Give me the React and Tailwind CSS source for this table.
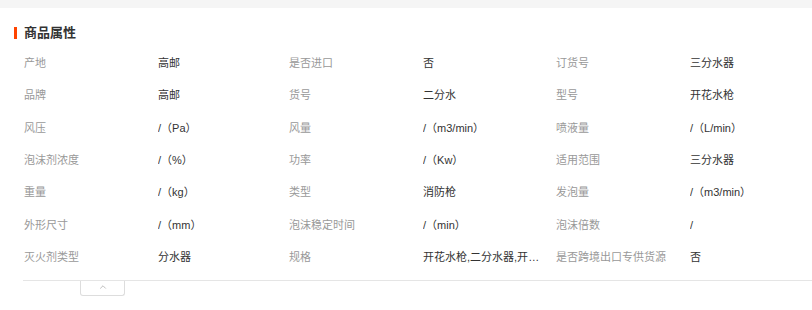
import { ChevronUp } from 'lucide-react';

const attrs = [
  ['产地', '高邮'],
  ['是否进口', '否'],
  ['订货号', '三分水器'],
  ['品牌', '高邮'],
  ['货号', '二分水'],
  ['型号', '开花水枪'],
  ['风压', '/（Pa）'],
  ['风量', '/（m3/min）'],
  ['喷液量', '/（L/min）'],
  ['泡沫剂浓度', '/（%）'],
  ['功率', '/（Kw）'],
  ['适用范围', '三分水器'],
  ['重量', '/（kg）'],
  ['类型', '消防枪'],
  ['发泡量', '/（m3/min）'],
  ['外形尺寸', '/（mm）'],
  ['泡沫稳定时间', '/（min）'],
  ['泡沫倍数', '/'],
  ['灭火剂类型', '分水器'],
  ['规格', '开花水枪,二分水器,开花水枪,三分水器'],
  ['是否跨境出口专供货源', '否'],
];

export default function App() {
  return (
    <div
      className="w-[812px] h-[310px] bg-white overflow-hidden"
      style={{ fontFamily: '"Liberation Sans", "Noto Sans CJK SC", sans-serif' }}
    >
      <div className="h-[8px] bg-[#f5f5f5]" />

      {/* section title */}
      <div className="flex items-center h-[14px] mt-[18px] pl-[14px]">
        <span className="w-[3px] h-[12px] bg-[#ff4400]" />
        <span className="ml-[7px] text-[13px] leading-[14px] font-bold text-[#333]">商品属性</span>
      </div>

      <div className="ml-[24px] mt-[7px]">
        <div className="grid grid-cols-[265px_267px_266px] w-[798px]">
          {attrs.map(([label, value], i) => (
            <div key={i} className="flex items-center h-[32.33px] text-[11px]">
              <span className="w-[134px] shrink-0 text-[#999] whitespace-nowrap">{label}</span>
              <span className="w-[124px] text-[#333] truncate">{value}</span>
            </div>
          ))}
        </div>
      </div>

      {/* collapse tab */}
      <div className="ml-[23px] mt-[7px] border-t border-[#e5e5e5]">
        <div className="ml-[57px] w-[45px] h-[15px] border border-t-0 border-[#ddd] rounded-b-[3px] flex items-start justify-center">
          <ChevronUp size={10} strokeWidth={1.5} className="text-[#999] mt-[1px]" />
        </div>
      </div>
    </div>
  );
}
